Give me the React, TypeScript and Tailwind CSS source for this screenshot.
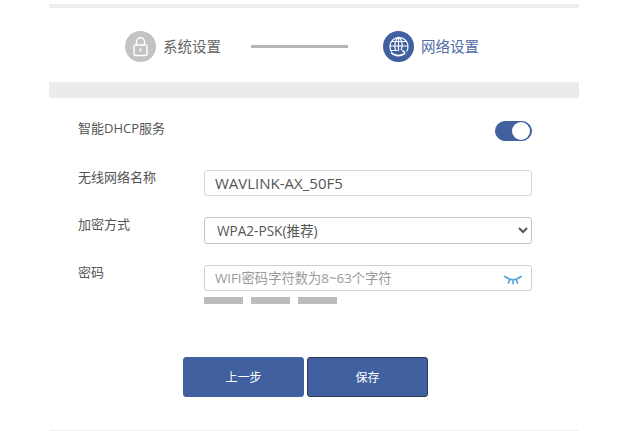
import { useState } from "react";

const fontStack = "font-['Open_Sans','Noto_Sans_CJK_SC',sans-serif]";

function LockIcon() {
  return (
    <svg width="31" height="31" viewBox="0 0 31 31" fill="none" stroke="#ffffff" strokeWidth="1.4">
      <rect x="9" y="14" width="13" height="10.500" rx="1.5" />
      <path d="M11.500 14v-3.200a4 4 0 0 1 8 0V14" />
      <path d="M15.500 17.500v3" strokeWidth="1.8" />
    </svg>
  );
}

function GlobeIcon() {
  return (
    <svg width="31" height="31" viewBox="0 0 31 31" fill="none" stroke="#ffffff" strokeWidth="1.2">
      <path d="M8.500 20.500a9 9 0 1 1 15 0" />
      <path d="M15.500 6c-4 3-4.500 10-2.500 14" />
      <path d="M15.500 6c4 3 4.500 9 2.500 13" />
      <path d="M15.500 6v14" />
      <path d="M8 10.500h15M6.500 15h18M7.500 19.500h7" />
      <path d="M8 21.500c3 3.500 9 4 13 1.500" strokeWidth="1.800" />
      <path d="M19 19.500c2 .5 3 2 2.500 4" strokeWidth="1.400" />
    </svg>
  );
}

function EyeClosedIcon() {
  return (
    <svg width="18" height="12" viewBox="0 0 18 12" fill="none" stroke="#4fa3dc" strokeWidth="1.6" strokeLinecap="round">
      <path d="M3 3.500c3 3.200 9 3.200 12 0" />
      <path d="M.8 2.500l2.700 1.500M17.200 2.500L14.500 4M5.500 6l-1 3M12.500 6l1 3M9 6.800v3" />
    </svg>
  );
}

export default function App() {
  const [dhcp, setDhcp] = useState(true);

  return (
    <div className={`h-[431px] w-[631px] overflow-hidden bg-white pt-1 pr-[52px] pl-[49px] ${fontStack}`}>
      <div className="h-1 bg-[#eeeeee]" />

      {/* steps */}
      <div className="flex h-[74px] items-center pt-[3px] pl-[76px]">
        <div className="flex h-[31px] w-[31px] items-center justify-center rounded-full bg-[#c3c3c3]">
          <LockIcon />
        </div>
        <span className="ml-[7px] w-[58px] text-[14.5px] leading-5 whitespace-nowrap text-[#666666]">系统设置</span>
        <div className="ml-[30px] h-[3px] w-[97px] bg-[#b5b5b5]" />
        <div className="ml-[35px] flex h-[31px] w-[31px] items-center justify-center rounded-full bg-[#41609f]">
          <GlobeIcon />
        </div>
        <span className="ml-[7px] text-[14.5px] leading-5 whitespace-nowrap text-[#4f6ca6]">网络设置</span>
      </div>

      <div className="h-4 bg-[#ebebeb]" />

      {/* form */}
      <div className="pt-[23px] pl-[29px]">
        <div className="flex h-5 items-center justify-between pr-[47px]">
          <span className="mb-[6px] text-[13px] leading-5 whitespace-nowrap text-[#555555]">智能DHCP服务</span>
          <button
            onClick={() => setDhcp(!dhcp)}
            className="flex h-5 w-[37px] items-center justify-end rounded-full border border-[#41609f] bg-[#41609f] pr-[1px]"
          >
            <span className="h-[18px] w-[18px] rounded-full bg-white" />
          </button>
        </div>

        <div className="mt-[29px] flex items-start">
          <label className="w-[126px] text-[13px] leading-[15px] whitespace-nowrap text-[#555555]">无线网络名称</label>
          <input
            defaultValue="WAVLINK-AX_50F5"
            className="h-[26px] w-[328px] rounded-[3px] border border-[#d8d8d8] px-[10px] text-[15px] text-[#555555] outline-none"
          />
        </div>

        <div className="mt-[21px] flex items-start">
          <label className="w-[126px] text-[13px] leading-[15px] whitespace-nowrap text-[#555555]">加密方式</label>
          <select className="h-[27px] w-[328px] rounded-[3px] border border-[#c4c4c4] bg-white pl-2 text-[13.6px] text-[#555555] outline-none">
            <option>WPA2-PSK(推荐)</option>
          </select>
        </div>

        <div className="mt-[21px] flex items-start">
          <label className="w-[126px] text-[13px] leading-[15px] whitespace-nowrap text-[#555555]">密码</label>
          <div className="w-[328px]">
            <div className="relative">
              <input
                placeholder="WIFI密码字符数为8~63个字符"
                className="h-[26px] w-full rounded-[3px] border border-[#d0d0d0] px-[10px] text-[13.3px] outline-none placeholder:text-[#999999]"
              />
              <span className="absolute top-[9px] right-[10px]">
                <EyeClosedIcon />
              </span>
            </div>
            <div className="mt-[6px] flex gap-2">
              <div className="h-[7px] w-[39px] bg-[#bcbcbc]" />
              <div className="h-[7px] w-[39px] bg-[#bcbcbc]" />
              <div className="h-[7px] w-[39px] bg-[#bcbcbc]" />
            </div>
          </div>
        </div>

        <div className="mt-[53px] flex gap-[3px] pl-[105px]">
          <button className="h-10 w-[121px] rounded-[3px] border border-[#41609f] bg-[#41609f] pt-[1px] text-xs text-white">上一步</button>
          <button className="h-10 w-[121px] rounded-[3px] border border-[#2f3b55] bg-[#41609f] pt-[1px] text-xs text-white">保存</button>
        </div>
      </div>

      <div className="mt-[33px] h-px bg-[#eeeeee]" />
    </div>
  );
}
